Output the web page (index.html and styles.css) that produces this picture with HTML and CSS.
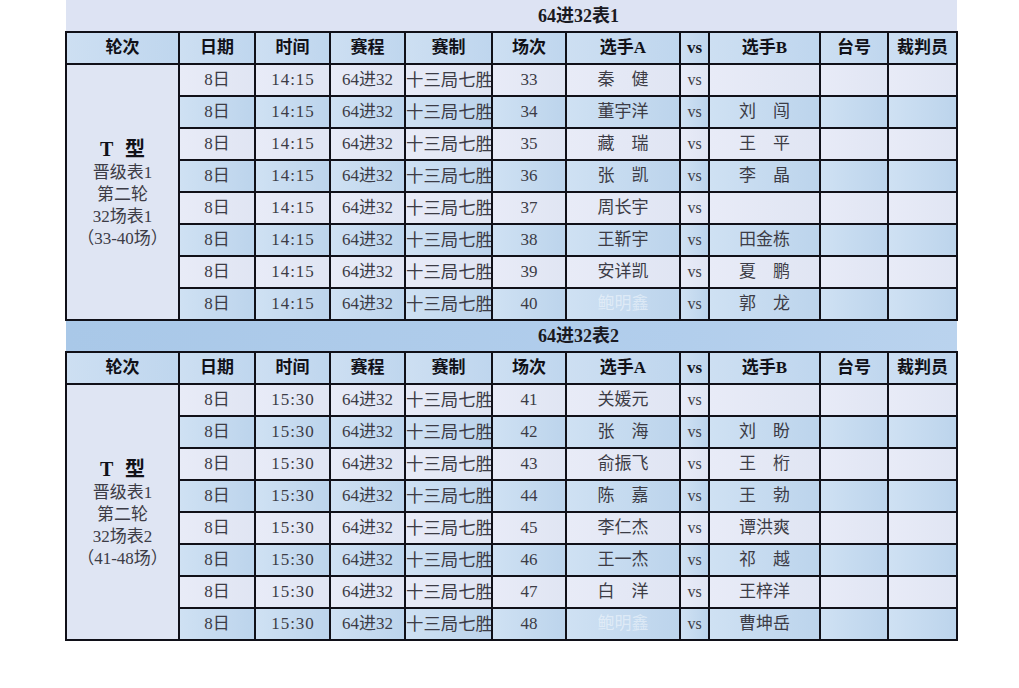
FILE: index.html
```html
<!DOCTYPE html>
<html lang="zh">
<head>
<meta charset="utf-8">
<title>64进32</title>
<link rel="stylesheet" href="styles.css">
</head>
<body>
<div class="page">
<table class="sheet">
  <colgroup>
    <col class="c1"><col class="c2"><col class="c3"><col class="c4"><col class="c5"><col class="c6"><col class="c7"><col class="c8"><col class="c9"><col class="c10"><col class="c11">
  </colgroup>
  <tbody>
    <tr class="title t1"><td colspan="11"><span>64进32表1</span></td></tr>
    <tr class="head">
      <th>轮次</th><th>日期</th><th>时间</th><th>赛程</th><th>赛制</th><th>场次</th><th>选手A</th><th>vs</th><th>选手B</th><th>台号</th><th>裁判员</th>
    </tr>
    <tr class="odd">
      <td class="round" rowspan="8"><div class="big">T 型</div><div>晋级表1</div><div>第二轮</div><div>32场表1</div><div>（33-40场）</div></td>
      <td>8日</td><td class="time">14:15</td><td>64进32</td><td class="fmt">十三局七胜</td><td>33</td><td>秦　健</td><td class="vs">vs</td><td></td><td></td><td></td>
    </tr>
    <tr class="even"><td>8日</td><td class="time">14:15</td><td>64进32</td><td class="fmt">十三局七胜</td><td>34</td><td>董宇洋</td><td class="vs">vs</td><td>刘　闯</td><td></td><td></td></tr>
    <tr class="odd"><td>8日</td><td class="time">14:15</td><td>64进32</td><td class="fmt">十三局七胜</td><td>35</td><td>藏　瑞</td><td class="vs">vs</td><td>王　平</td><td></td><td></td></tr>
    <tr class="even"><td>8日</td><td class="time">14:15</td><td>64进32</td><td class="fmt">十三局七胜</td><td>36</td><td>张　凯</td><td class="vs">vs</td><td>李　晶</td><td></td><td></td></tr>
    <tr class="odd"><td>8日</td><td class="time">14:15</td><td>64进32</td><td class="fmt">十三局七胜</td><td>37</td><td>周长宇</td><td class="vs">vs</td><td></td><td></td><td></td></tr>
    <tr class="even"><td>8日</td><td class="time">14:15</td><td>64进32</td><td class="fmt">十三局七胜</td><td>38</td><td>王靳宇</td><td class="vs">vs</td><td>田金栋</td><td></td><td></td></tr>
    <tr class="odd"><td>8日</td><td class="time">14:15</td><td>64进32</td><td class="fmt">十三局七胜</td><td>39</td><td>安详凯</td><td class="vs">vs</td><td>夏　鹏</td><td></td><td></td></tr>
    <tr class="even"><td>8日</td><td class="time">14:15</td><td>64进32</td><td class="fmt">十三局七胜</td><td>40</td><td class="faint">鲍明鑫</td><td class="vs">vs</td><td>郭　龙</td><td></td><td></td></tr>

    <tr class="title t2"><td colspan="11"><span>64进32表2</span></td></tr>
    <tr class="head">
      <th>轮次</th><th>日期</th><th>时间</th><th>赛程</th><th>赛制</th><th>场次</th><th>选手A</th><th>vs</th><th>选手B</th><th>台号</th><th>裁判员</th>
    </tr>
    <tr class="odd">
      <td class="round" rowspan="8"><div class="big">T 型</div><div>晋级表1</div><div>第二轮</div><div>32场表2</div><div>（41-48场）</div></td>
      <td>8日</td><td class="time">15:30</td><td>64进32</td><td class="fmt">十三局七胜</td><td>41</td><td>关媛元</td><td class="vs">vs</td><td></td><td></td><td></td>
    </tr>
    <tr class="even"><td>8日</td><td class="time">15:30</td><td>64进32</td><td class="fmt">十三局七胜</td><td>42</td><td>张　海</td><td class="vs">vs</td><td>刘　盼</td><td></td><td></td></tr>
    <tr class="odd"><td>8日</td><td class="time">15:30</td><td>64进32</td><td class="fmt">十三局七胜</td><td>43</td><td>俞振飞</td><td class="vs">vs</td><td>王　桁</td><td></td><td></td></tr>
    <tr class="even"><td>8日</td><td class="time">15:30</td><td>64进32</td><td class="fmt">十三局七胜</td><td>44</td><td>陈　嘉</td><td class="vs">vs</td><td>王　勃</td><td></td><td></td></tr>
    <tr class="odd"><td>8日</td><td class="time">15:30</td><td>64进32</td><td class="fmt">十三局七胜</td><td>45</td><td>李仁杰</td><td class="vs">vs</td><td>谭洪爽</td><td></td><td></td></tr>
    <tr class="even"><td>8日</td><td class="time">15:30</td><td>64进32</td><td class="fmt">十三局七胜</td><td>46</td><td>王一杰</td><td class="vs">vs</td><td>祁　越</td><td></td><td></td></tr>
    <tr class="odd"><td>8日</td><td class="time">15:30</td><td>64进32</td><td class="fmt">十三局七胜</td><td>47</td><td>白　洋</td><td class="vs">vs</td><td>王梓洋</td><td></td><td></td></tr>
    <tr class="even"><td>8日</td><td class="time">15:30</td><td>64进32</td><td class="fmt">十三局七胜</td><td>48</td><td class="faint">鲍明鑫</td><td class="vs">vs</td><td>曹坤岳</td><td></td><td></td></tr>
  </tbody>
</table>
</div>
</body>
</html>
```

FILE: styles.css
```css
html, body {
  margin: 0;
  padding: 0;
  background: #ffffff;
}

.page {
  padding-left: 65px;
}

.sheet {
  border-collapse: collapse;
  table-layout: fixed;
  width: 891px;
  font-family: "Liberation Serif", "Noto Sans CJK SC", serif;
  font-size: 17px;
  color: #3c3c46;
}

.c1 { width: 113px; }
.c2 { width: 76px; }
.c3 { width: 75px; }
.c4 { width: 75px; }
.c5 { width: 87px; }
.c6 { width: 74px; }
.c7 { width: 114px; }
.c8 { width: 29px; }
.c9 { width: 111px; }
.c10 { width: 68px; }
.c11 { width: 69px; }

.sheet tr {
  height: 32px;
}

.sheet td,
.sheet th {
  border: 2px solid #101018;
  padding: 0;
  text-align: center;
  vertical-align: middle;
  white-space: nowrap;
  overflow: hidden;
  line-height: 20px;
}

.title td {
  border-left: none;
  border-right: none;
  border-top: none;
  text-align: left;
  padding-left: 472px;
  font-weight: bold;
  font-size: 18px;
  color: #1a1a22;
}

.t1 td {
  background: #dde3f3;
}

.t2 td {
  background: linear-gradient(to right, #a9c8e8, #b2ceec 70%, #bad3ee);
}

.head th {
  background: linear-gradient(to right, #cddff2, #bfd6ee);
  font-family: "Liberation Serif", "Noto Sans CJK SC", serif;
  font-weight: bold;
  font-size: 17px;
  color: #111118;
}

.odd td {
  background: linear-gradient(to right, #e8ebf7, #e0e5f3);
}

.even td {
  background: linear-gradient(to right, #cfe1f3, #bcd4ec);
}

.sheet td.round {
  background: #dfe5f3;
  line-height: 22px;
  font-size: 17px;
  color: #3c3c46;
  padding-top: 3px;
}

.round .big {
  font-weight: bold;
  font-size: 20px;
  word-spacing: 7px;
  color: #111118;
  margin-bottom: 2px;
}

.sheet td.time {
  letter-spacing: 1px;
  padding-left: 1px;
}

.sheet td.fmt {
  text-align: left;
  font-size: 17.4px;
}

.sheet td.vs {
  font-size: 16px;
}

.sheet td.faint {
  color: rgba(255, 255, 255, 0.45);
}
```
